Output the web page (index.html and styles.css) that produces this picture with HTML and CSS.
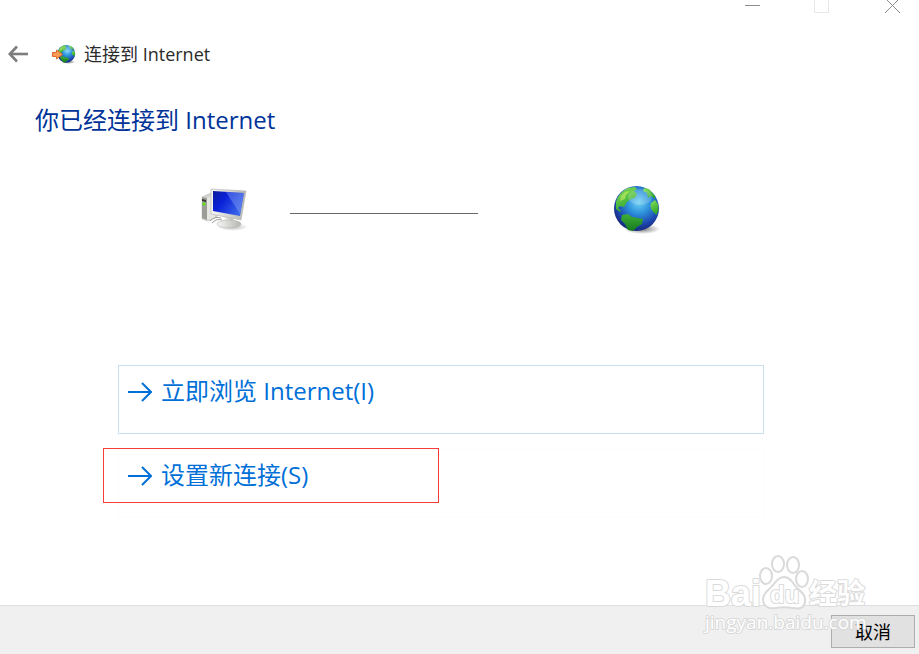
FILE: index.html
```html
<!DOCTYPE html>
<html lang="zh-CN">
<head>
    <meta charset="UTF-8">
    <meta name="viewport" content="width=device-width, initial-scale=1.0">
    <title>连接到 Internet</title>
    <link rel="stylesheet" href="styles.css">
</head>
<body>
    <!-- Shared gradients and the globe -->
    <svg class="defs" aria-hidden="true">
        <defs>
            <radialGradient id="ocean" cx="0.55" cy="0.36" r="0.62">
                <stop offset="0" stop-color="#6fd0f4"/>
                <stop offset="0.4" stop-color="#2e93dc"/>
                <stop offset="0.8" stop-color="#1c45ae"/>
                <stop offset="1" stop-color="#172c80"/>
            </radialGradient>
            <linearGradient id="land" x1="0" y1="0" x2="0.4" y2="1">
                <stop offset="0" stop-color="#86e25a"/>
                <stop offset="1" stop-color="#2fa52e"/>
            </linearGradient>
            <linearGradient id="land-dark" x1="0" y1="0" x2="0" y2="1">
                <stop offset="0" stop-color="#3fae3a"/>
                <stop offset="1" stop-color="#157a1c"/>
            </linearGradient>
            <radialGradient id="shadow">
                <stop offset="0" stop-color="#555" stop-opacity="0.8"/>
                <stop offset="1" stop-color="#555" stop-opacity="0"/>
            </radialGradient>
            <linearGradient id="screen" x1="0" y1="0" x2="1" y2="0.6">
                <stop offset="0" stop-color="#0a1d9a"/>
                <stop offset="0.4" stop-color="#0920d8"/>
                <stop offset="1" stop-color="#3c67ea"/>
            </linearGradient>
            <linearGradient id="metal" x1="0" y1="0" x2="1" y2="0">
                <stop offset="0" stop-color="#f6f6f4"/>
                <stop offset="1" stop-color="#b4b4b0"/>
            </linearGradient>
            <symbol id="globe" viewBox="0 0 48 50">
                <ellipse cx="29" cy="45" rx="18" ry="5" fill="url(#shadow)"/>
                <circle cx="23.500" cy="24.500" r="22.500" fill="url(#ocean)"/>
                <path d="M3 18C5 11 9 7 15 4l7-1 2 2-3 2 3 3-2 4-4 1-4 3-3 5-4-1-2 2 3 3-1 1-4-3Z" fill="url(#land)"/>
                <path d="M9 31l6-1 4 3 6 1 5 1-1 5-5 3-4 4-5-1-3-6-4-4Z" fill="url(#land-dark)"/>
                <path d="M31 4l5 1 6 7v3l-4-3-3 2-1-5-4-2Z" fill="url(#land)"/>
                <path d="M38 19l4-3 3 4 .500 6-2 5-5-5-1-4Z" fill="url(#land)"/>
                <path d="M8 12l4-4 5-1-4 4-1 4-5 2Z" fill="#e0f36a" opacity="0.5"/>
                <ellipse cx="27" cy="13" rx="12" ry="8" fill="#fff" opacity="0.18"/>
            </symbol>
        </defs>
    </svg>

    <div class="window">
        <div class="caption">
            <button class="caption-btn" aria-label="最小化">
                <svg width="16" height="14"><path d="M1 5.500h15" stroke="#8d8d8d"/></svg>
            </button>
            <button class="caption-btn" aria-label="最大化" disabled>
                <svg width="16" height="14"><path d="M.5-2v14.500h14v-14.500" fill="none" stroke="#e6e6e6"/></svg>
            </button>
            <button class="caption-btn" aria-label="关闭">
                <svg width="16" height="14"><path d="M1-2l15 15M16-2l-15 15" stroke="#8a8a8a"/></svg>
            </button>
        </div>

        <header class="header">
            <button class="back-btn" aria-label="返回">
                <svg width="20" height="18" viewBox="0 0 20 18" fill="none" stroke="#7d7d7d">
                    <path d="M20 9H2" stroke-width="2.600"/>
                    <path d="M9 1.500L1.800 9L9 16.500" stroke-width="2.600"/>
                </svg>
            </button>
            <svg class="app-icon" width="24" height="20" viewBox="0 0 24 20">
                <use href="#globe" x="5" y="0" width="19" height="20"/>
                <path d="M.5 8.500h4V6l6 4.500-6 4.500v-2.500h-4Z" fill="#f79a55" stroke="#dd6a2a"/>
            </svg>
            <span>连接到 Internet</span>
        </header>

        <main class="content">
            <h1>你已经连接到 Internet</h1>

            <div class="diagram">
                <svg width="48" height="48" viewBox="0 0 48 48">
                    <ellipse cx="33" cy="42" rx="15" ry="4" fill="url(#shadow)" opacity="0.5"/>
                    <path d="M2 12l9-4 6 2v22l-9 4-6-2Z" fill="#d4d4d0" stroke="#b4b4b0" stroke-width="0.5"/>
                    <path d="M2 12l5 1v22l-5-2Z" fill="#9c9c98"/>
                    <path d="M7 13l8-3v23l-8 2Z" fill="#e6e6e2"/>
                    <path d="M2 14l4 1v2l-4-1Z" fill="#333"/>
                    <path d="M2.500 17l3 1v3l-3-1Z" fill="#67dc20"/>
                    <path d="M10 36q5-5 11-3M12 38q5-5 10-3" fill="none" stroke="#888" stroke-width="0.800"/>
                    <path d="M24 31l9 2 1 6h-8Z" fill="url(#metal)"/>
                    <ellipse cx="29" cy="39" rx="12" ry="4" fill="url(#metal)" stroke="#b4b4b2" stroke-width="0.600"/>
                    <path d="M11 4l35 2-5 29-30-6Z" fill="url(#metal)" stroke="#b8b8b6" stroke-width="0.700"/>
                    <path d="M13 6l31 2-4 23-27-5Z" fill="url(#screen)"/>
                    <path d="M26 7l18 1-4 21Z" fill="#8ba9f5" opacity="0.4"/>
                </svg>
                <div class="link-line"></div>
                <svg class="globe" width="48" height="50"><use href="#globe"/></svg>
            </div>

            <div class="options">
                <button class="option focused">
                    <svg width="25" height="20" viewBox="0 0 25 20"><path d="M1 10h23M15 1l9 9-9 9"/></svg>
                    <span>立即浏览 Internet(I)</span>
                </button>
                <button class="option">
                    <svg width="25" height="20" viewBox="0 0 25 20"><path d="M1 10h23M15 1l9 9-9 9"/></svg>
                    <span>设置新连接(S)</span>
                </button>
                <div class="highlight"></div>
            </div>
        </main>

        <footer class="footer">
            <button class="cancel-btn">取消</button>
            <svg class="watermark" width="168" height="84" viewBox="0 0 168 84">
                <g class="mark">
                    <text class="mark-latin" x="2" y="53">Bai</text>
                    <ellipse cx="63" cy="23" rx="6" ry="8"/>
                    <ellipse cx="75" cy="11" rx="6" ry="8"/>
                    <ellipse cx="90" cy="12" rx="6" ry="8"/>
                    <ellipse cx="99" cy="26" rx="6" ry="8"/>
                    <path d="M81 24c7 0 9 7 13 11 6 5 9 8 8 14-1 7-7 7-12 6-6-1-12-1-18 0-7 1-12-2-12-9 0-6 6-9 9-13 4-4 6-9 12-9Z"/>
                    <text class="mark-du" x="67" y="50">du</text>
                    <text class="mark-cjk" x="106" y="51">经验</text>
                </g>
                <text class="mark-url" x="2" y="76">jingyan.baidu.com</text>
            </svg>
        </footer>
    </div>
</body>
</html>
```

FILE: styles.css
```css
* {
    box-sizing: border-box;
}
body {
    margin: 0;
    background: #fff;
    color: #2b2b2b;
    font-family: "Open Sans", "Noto Sans CJK SC", sans-serif;
}
button {
    margin: 0;
    padding: 0;
    border: none;
    background: none;
    font-family: inherit;
    cursor: pointer;
}
svg {
    display: block;
    flex-shrink: 0;
}
.defs {
    position: absolute;
    width: 0;
    height: 0;
}
.window {
    display: flex;
    flex-direction: column;
    min-height: 100vh;
}

/* Caption buttons */
.caption {
    display: flex;
    justify-content: flex-end;
    gap: 54px;
    height: 14px;
    padding-right: 19px;
}

.header {
    display: flex;
    align-items: center;
    height: 52px;
    margin-top: 14px;
    padding-left: 8px;
    font-size: 18px;
    line-height: 24px;
}
.app-icon {
    margin: 0 8px 0 24px;
}

.content {
    flex: 1;
    padding: 24px 155px 24px 118px;
}
h1 {
    margin: 0 0 0 -83px;
    color: #003399;
    font-size: 24px;
    font-weight: normal;
    line-height: 32px;
}
.diagram {
    display: grid;
    grid-template-columns: 90px 7fr 5fr 48px;
    align-items: center;
    margin: 48px 103px 0 82px;
}
.link-line {
    height: 1px;
    margin-top: 8px;
    background: #696969;
}
.globe {
    grid-column: 4;
}

/* Command links */
.options {
    position: relative;
    display: flex;
    flex-direction: column;
    gap: 15px;
    margin-top: 131px;
}
.option {
    display: flex;
    align-items: flex-start;
    gap: 9px;
    height: 69px;
    padding: 9px 8px;
    border: 1px solid #fcfcfc;
    color: #0070d8;
    font-size: 24px;
    line-height: 32px;
    text-align: left;
}
.option.focused {
    border-color: #c8dff0;
}
.option svg {
    margin-top: 7px;
    fill: none;
    stroke: #0070d8;
    stroke-width: 2;
}
.highlight {
    position: absolute;
    top: 83px;
    left: -15px;
    width: 336px;
    height: 55px;
    border: 1px solid #f83c3c;
    pointer-events: none;
}

.footer {
    position: relative;
    display: flex;
    justify-content: flex-end;
    padding: 9px 4px 6px;
    border-top: 1px solid #dfdfdf;
    background: #f0f0f0;
}
.cancel-btn {
    width: 84px;
    height: 33px;
    border: 1px solid #adadad;
    background: #e1e1e1;
    color: #000;
    font-size: 18px;
    line-height: 24px;
}

/* Watermark over the footer */
.watermark {
    position: absolute;
    right: 48px;
    bottom: 17px;
    pointer-events: none;
}
.watermark text {
    paint-order: stroke;
}
.mark {
    fill: #fff;
    stroke: #dadada;
    stroke-width: 2;
    stroke-linejoin: round;
}
.mark-latin {
    font-family: "Liberation Sans", sans-serif;
    font-size: 36px;
    font-weight: bold;
}
.mark-du {
    font-family: "Liberation Sans", sans-serif;
    font-size: 24px;
    font-weight: bold;
}
.mark-cjk {
    font-size: 28px;
    font-weight: bold;
}
.mark-url {
    fill: #fff;
    stroke: #d8d8d8;
    stroke-width: 2;
    stroke-linejoin: round;
    font-size: 19px;
}
```
